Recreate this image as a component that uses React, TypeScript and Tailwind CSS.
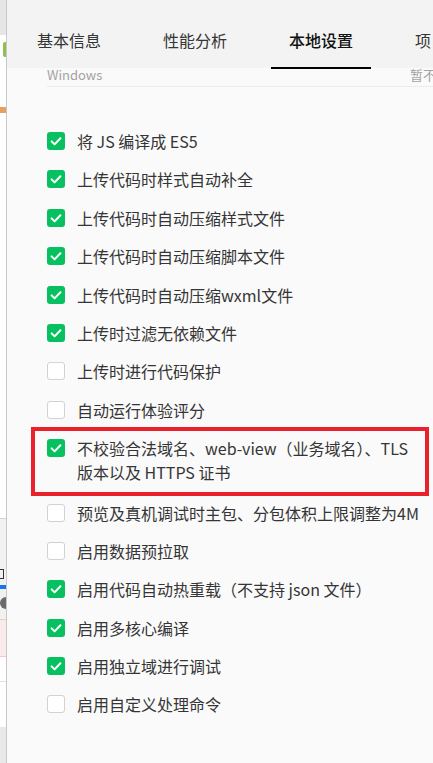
import React from 'react';

type Option = {
  id: string;
  label: React.ReactNode;
  checked: boolean;
  highlight?: boolean;
};

const options: Option[] = [
  { id: 'es5', label: '将 JS 编译成 ES5', checked: true },
  { id: 'autoprefix', label: '上传代码时样式自动补全', checked: true },
  { id: 'minify-css', label: '上传代码时自动压缩样式文件', checked: true },
  { id: 'minify-js', label: '上传代码时自动压缩脚本文件', checked: true },
  { id: 'minify-wxml', label: '上传代码时自动压缩wxml文件', checked: true },
  { id: 'filter', label: '上传时过滤无依赖文件', checked: true },
  { id: 'protect', label: '上传时进行代码保护', checked: false },
  { id: 'audits', label: '自动运行体验评分', checked: false },
  {
    id: 'urlcheck',
    label: (
      <>
        不校验合法域名、web-view（业务域名）、TLS
        <br />
        版本以及 HTTPS 证书
      </>
    ),
    checked: true,
    highlight: true,
  },
  { id: 'bigpackage', label: '预览及真机调试时主包、分包体积上限调整为4M', checked: false },
  { id: 'prefetch', label: '启用数据预拉取', checked: false },
  { id: 'hotreload', label: '启用代码自动热重载（不支持 json 文件）', checked: true },
  { id: 'multicore', label: '启用多核心编译', checked: true },
  { id: 'isolate', label: '启用独立域进行调试', checked: true },
  { id: 'custom-cmd', label: '启用自定义处理命令', checked: false },
];

const tabs = ['基本信息', '性能分析', '本地设置', '项目成员'];

const Checkbox: React.FC<{ checked: boolean }> = ({ checked }) =>
  checked ? (
    <span className="flex h-[18px] w-[18px] shrink-0 items-center justify-center rounded-[3px] bg-[#07c160]">
      <svg width="18" height="18" viewBox="0 0 18 18" fill="none">
        <path d="M4.6 9.4l3 3 5.8-6.2" stroke="#fff" strokeWidth="2" strokeLinecap="round" strokeLinejoin="round" />
      </svg>
    </span>
  ) : (
    <span className="h-[18px] w-[18px] shrink-0 rounded-[3px] border border-[#d2d2d2] bg-white" />
  );

export default function App() {
  return (
    <div
      className="flex h-[763px] w-[433px] overflow-hidden bg-[#fafafa] text-[#353535]"
      style={{ fontFamily: '"Noto Sans CJK SC", "Noto Sans", sans-serif' }}
    >
      {/* window behind, peeking out on the left */}
      <div className="flex w-[6px] shrink-0 flex-col bg-white">
        <div className="h-[35px] bg-[#e6e6e6]" />
        <div className="ml-[3px] mt-[7px] h-[15px] rounded-l-[2px] bg-[#8cc152]" />
        <div className="mt-[50px] h-[6px] bg-[#e8a060]" />
        <div className="h-[405px]" />
        <div className="h-px bg-[#d4d4d4]" />
        <div className="flex flex-col bg-[#f1f1f1]">
          <div className="mt-[50px] h-[10px] w-[4px] border-[1.5px] border-l-0 border-[#333]" />
          <div className="mt-[6px] h-[4px] bg-[#1a73e8]" />
          <div className="mt-[8px] h-[12px] rounded-l-full bg-[#6b6b6b]" />
          <div className="mt-[10px] h-[38px] border-y border-[#f2c9c9] bg-[#fbeaea]" />
        </div>
        <div className="h-[24px] bg-white" />
        <div className="h-px bg-[#e2e2e2]" />
        <div className="h-[45px] bg-white" />
        <div className="flex-1 bg-[#e8e8e8]" />
      </div>
      <div className="w-px shrink-0 bg-[#c8c8c8]" />

      {/* settings panel */}
      <div className="flex min-w-0 flex-1 flex-col">
        <div className="flex h-[68px] shrink-0 gap-[26px] overflow-visible bg-[#f3f3f3] pl-[12px] whitespace-nowrap">
          {tabs.map((tab, i) => (
            <div
              key={tab}
              className={`flex h-[69px] w-[100px] shrink-0 justify-center pt-[28px] text-[16px] leading-[24px] ${
                i === 2 ? 'border-b-2 border-black font-medium text-[#111]' : 'border-b-2 border-transparent text-[#353535]'
              }`}
            >
              {tab}
            </div>
          ))}
        </div>

        <div className="flex flex-col pl-[40px]">
          <div className="flex h-[19px] items-start justify-between border-b border-[#ececec] text-[13px] leading-[13px] text-[#a3a3a3] whitespace-nowrap">
            <span>Windows</span>
            <span className="mr-[-29px]">暂不支持</span>
          </div>

          <div className="mt-[42px] flex flex-col gap-[14.4px]">
            {options.map(opt => (
              <div key={opt.id} className={`relative ${opt.highlight ? 'mb-[2px]' : ''}`}>
                {opt.highlight && (
                  <span className="pointer-events-none absolute left-[-16px] right-[4px] top-[-9px] bottom-[-12px] border-[4px] border-[#e8212b]" />
                )}
                <div className="flex items-start gap-[12px]">
                  <div className="flex h-[24px] items-center">
                    <Checkbox checked={opt.checked} />
                  </div>
                  <span className="text-[16px] leading-[24px] whitespace-nowrap">{opt.label}</span>
                </div>
              </div>
            ))}
          </div>
        </div>
      </div>
    </div>
  );
}
